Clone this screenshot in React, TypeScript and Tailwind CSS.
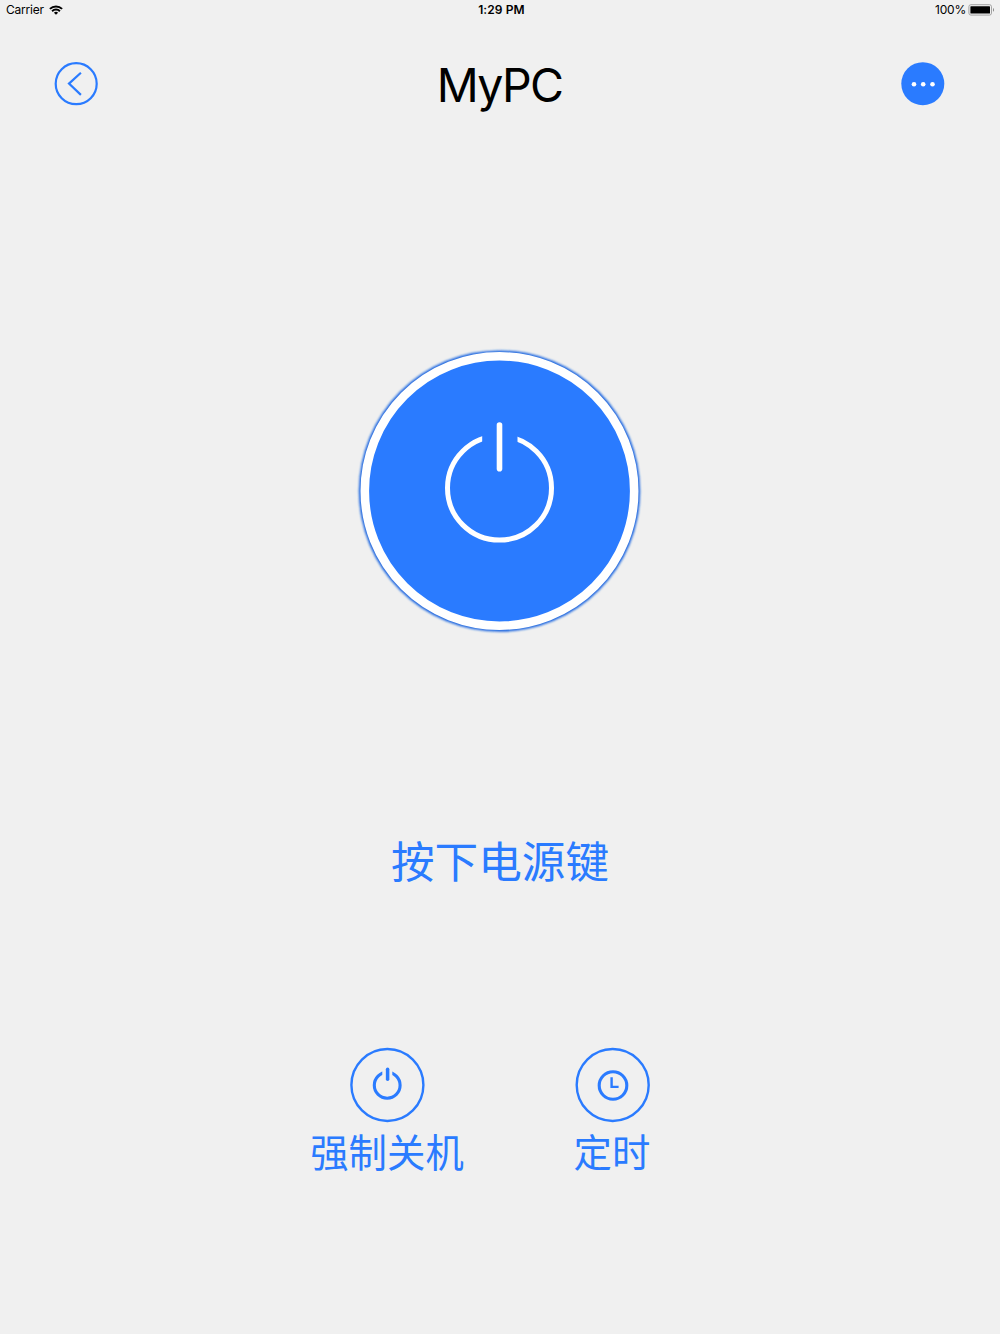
import { useState } from "react";

interface ActionButtonProps {
  label: string;
  onClick?: () => void;
  children: React.ReactNode;
}

function WifiIcon() {
  return (
    <svg className="h-[10px] w-[14px]" viewBox="0 0 14 10" fill="none" stroke="#000" strokeWidth="2">
      <path d="M0.9 3.9a8.7 8.7 0 0 1 12.2 0" />
      <path d="M3.1 6.2a5.6 5.6 0 0 1 7.8 0" />
      <path d="M7 9.8L4.9 7.8a3.1 3.1 0 0 1 4.2 0z" fill="#000" stroke="none" />
    </svg>
  );
}

function BatteryIcon() {
  return (
    <svg className="h-[12px] w-[27px]" viewBox="0 0 27 12">
      <rect x="0.9" y="0.7" width="22.6" height="10.4" rx="2" fill="none" stroke="#9b9b9b" strokeWidth="0.9" />
      <rect x="2.4" y="2.2" width="19.6" height="7.4" rx="0.6" fill="#000" />
      <path d="M25 4c1.2.5 1.2 3.3 0 3.8z" fill="#777" />
    </svg>
  );
}

function StatusBar() {
  return (
    <div className="grid h-5 grid-cols-3 items-center pl-[6px] pr-[5px] text-[12px] leading-5 text-black">
      <div className="flex items-center gap-[5px]">
        <span className="w-[38px] tracking-[-0.2px]">Carrier</span>
        <WifiIcon />
      </div>
      <span className="pl-[2px] text-center font-semibold tracking-[0.1px]">1:29 PM</span>
      <div className="flex items-center justify-end gap-[2px]">
        <span className="tracking-[-0.2px]">100%</span>
        <BatteryIcon />
      </div>
    </div>
  );
}

function ActionButton({ label, onClick, children }: ActionButtonProps) {
  return (
    <button onClick={onClick} className="flex w-[160px] flex-col items-center">
      <svg className="h-[76px] w-[76px]" viewBox="0 0 76 76" fill="none" stroke="#2a7bff">
        {children}
      </svg>
      <span className="mt-[2px] whitespace-nowrap text-[38.4px] leading-[56px]">{label}</span>
    </button>
  );
}

export default function App() {
  const [pressed, setPressed] = useState(false);

  return (
    <div className="flex h-[1334px] w-[1000px] flex-col overflow-hidden bg-[#f0f0f0] font-[Inter,'Noto_Sans_CJK_SC',sans-serif] text-[#2a7bff]">
      <StatusBar />

      {/* Header */}
      <header className="mt-[42px] flex h-[44px] items-center justify-between pl-[54px] pr-[55px]">
        <button aria-label="返回">
          <svg className="h-[44px] w-[44px]" viewBox="0 0 44 44" fill="none" stroke="#2a7bff">
            <circle cx="22.2" cy="21.7" r="20.5" strokeWidth="2.2" />
            <path d="M26.9 10.8L15 21.6l11.9 11.3" strokeWidth="2.2" />
          </svg>
        </button>
        <h1 className="pt-[2px] text-[46.5px] leading-[44px] tracking-[-1.7px] text-black">MyPC</h1>
        <button aria-label="更多">
          <svg className="h-[44px] w-[44px]" viewBox="0 0 44 44">
            <circle cx="21.8" cy="21.7" r="21.5" fill="#2a7bff" />
            <g fill="#fff">
              <circle cx="13" cy="22.2" r="2.3" />
              <circle cx="22.2" cy="22.2" r="2.3" />
              <circle cx="31.5" cy="22.2" r="2.3" />
            </g>
          </svg>
        </button>
      </header>

      {/* Power button */}
      <main className="flex flex-col items-center">
        <button
          aria-label="电源"
          className="mt-[235px]"
          onPointerDown={() => setPressed(true)}
          onPointerUp={() => setPressed(false)}
        >
          <svg className={`h-[300px] w-[300px] ${pressed ? "opacity-80" : ""}`} viewBox="0 0 300 300">
            <defs>
              <filter id="glow" x="-5%" y="-5%" width="110%" height="110%">
                <feGaussianBlur stdDeviation="0.9" />
              </filter>
            </defs>
            <circle cx="149.5" cy="150.1" r="140.7" fill="#1f66e0" filter="url(#glow)" />
            <circle cx="149.5" cy="150" r="134.7" fill="#2a7bff" stroke="#fff" strokeWidth="8.6" />
            <circle cx="149.5" cy="147.1" r="52" fill="none" stroke="#fff" strokeWidth="5" />
            <rect x="132.2" y="92" width="35.3" height="14" fill="#2a7bff" />
            <path d="M149.5 84v43.8" fill="none" stroke="#fff" strokeWidth="5.6" strokeLinecap="round" />
          </svg>
        </button>
        <p className="mt-[190px] text-[43.6px] leading-[64px]">按下电源键</p>
      </main>

      {/* Bottom actions */}
      <div className="mt-[152px] flex gap-[65px] pl-[307px]">
        <ActionButton label="强制关机">
          <circle cx="38.4" cy="38" r="36" strokeWidth="2.4" />
          <circle cx="38.2" cy="38.3" r="12.9" strokeWidth="3.1" />
          <rect x="33.3" y="22" width="10" height="8" fill="#f0f0f0" stroke="none" />
          <path d="M38.6 22.2v10" strokeWidth="3.5" strokeLinecap="round" />
        </ActionButton>
        <ActionButton label="定时">
          <circle cx="38.7" cy="38" r="36" strokeWidth="2.4" />
          <circle cx="39" cy="38.5" r="13.8" strokeWidth="3.1" />
          <path d="M37.6 30.3v9.6h7" strokeWidth="2.4" />
        </ActionButton>
      </div>
    </div>
  );
}
